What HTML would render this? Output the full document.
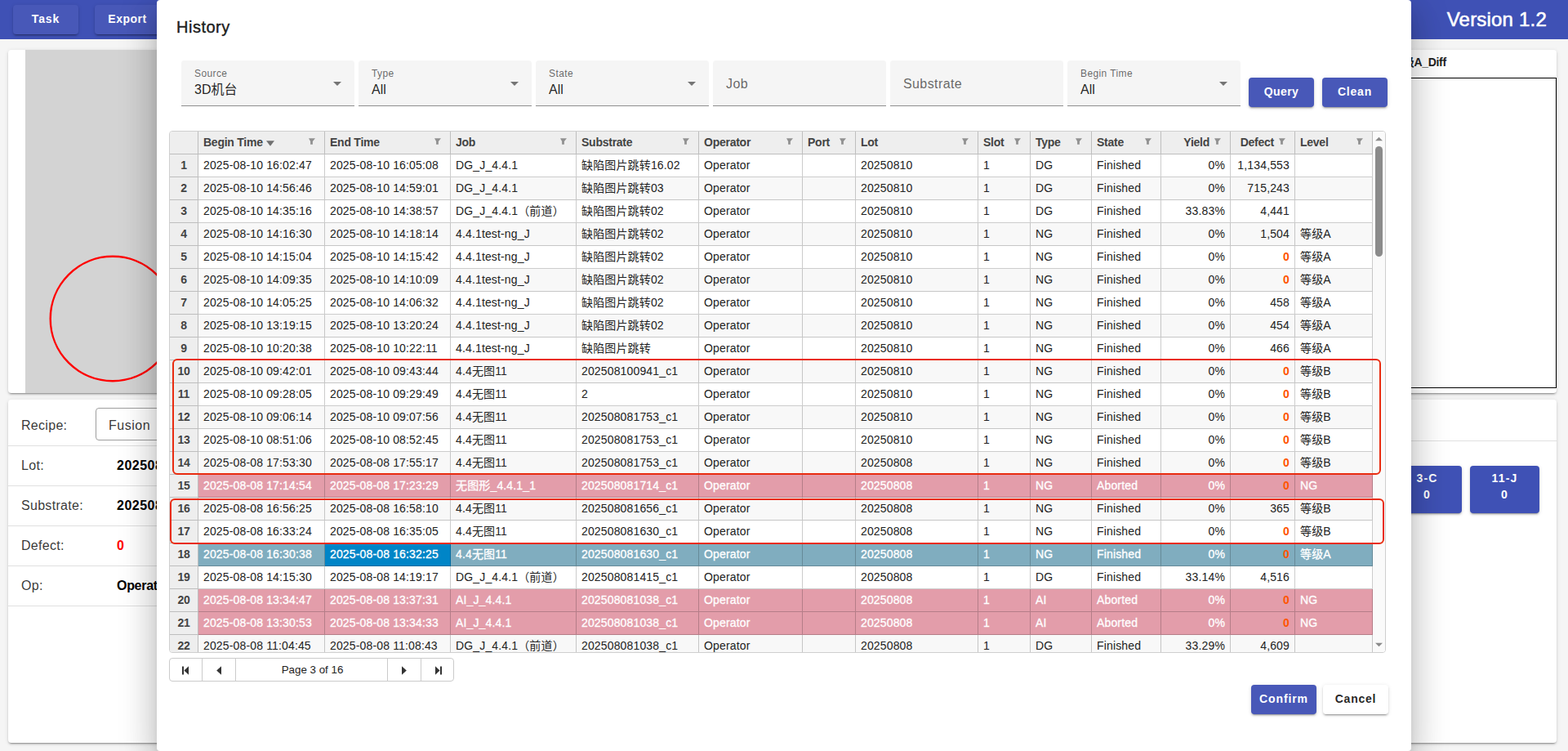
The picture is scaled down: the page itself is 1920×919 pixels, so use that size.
<!DOCTYPE html>
<html lang="en"><head><meta charset="utf-8"><title>History</title>
<style>
*{box-sizing:border-box;margin:0;padding:0}
html,body{width:1920px;height:919px;overflow:hidden}
body{position:relative;background:#f5f5f5;font-family:"Liberation Sans","Noto Sans CJK SC",sans-serif;font-size:14px;color:rgba(0,0,0,.87)}
.abs{position:absolute}
/* app bar */
#bar{position:absolute;left:0;top:0;width:1920px;height:48px;background:#3f51b5}
.btn{position:absolute;height:36px;border-radius:4px;font-weight:bold;font-size:14px;letter-spacing:1.2px;line-height:34px;text-align:center;white-space:nowrap}
.btn.p{background:#4858b8;color:#fff;box-shadow:0 3px 1px -2px rgba(0,0,0,.2),0 2px 2px 0 rgba(0,0,0,.14),0 1px 5px 0 rgba(0,0,0,.12)}
.btn.w{background:#fff;color:rgba(0,0,0,.87);box-shadow:0 3px 1px -2px rgba(0,0,0,.2),0 2px 2px 0 rgba(0,0,0,.14),0 1px 5px 0 rgba(0,0,0,.12)}
#ver{position:absolute;right:26px;top:9px;height:30px;line-height:30px;font-size:24px;font-weight:normal;letter-spacing:.2px;-webkit-text-stroke:.55px #fff;color:#fff;white-space:nowrap}
/* cards */
.card{position:absolute;background:#fff;border-radius:4px;box-shadow:0 3px 1px -2px rgba(0,0,0,.2),0 2px 2px 0 rgba(0,0,0,.14),0 1px 5px 0 rgba(0,0,0,.12);overflow:hidden}
.lrow{position:absolute;left:0;width:100%;height:49px;border-bottom:1px solid #e0e0e0}
.lrow .k{position:absolute;left:16px;top:0;line-height:47px;font-size:16px;letter-spacing:.3px;color:rgba(0,0,0,.8)}
.lrow .v{position:absolute;left:133px;top:0;line-height:47px;font-size:16px;font-weight:bold;color:#000;white-space:nowrap;letter-spacing:.5px}
/* dialog */
#dlg{position:absolute;left:192px;top:0;width:1536px;height:919px;background:#fff;border-radius:4px;box-shadow:0 11px 15px -7px rgba(0,0,0,.2),0 24px 38px 3px rgba(0,0,0,.14),0 9px 46px 8px rgba(0,0,0,.12)}
#ttl{position:absolute;left:24px;top:18px;font-size:20px;line-height:30px;font-weight:normal;letter-spacing:.5px;-webkit-text-stroke:.45px rgba(0,0,0,.87);color:rgba(0,0,0,.87)}
.fld{position:absolute;top:74px;width:212px;height:56px;background:#f5f5f5;border-radius:4px 4px 0 0;border-bottom:1px solid #8e8e8e}
.fld .lb{position:absolute;left:16px;top:9px;font-size:12px;line-height:14px;letter-spacing:.4px;color:rgba(0,0,0,.6)}
.fld .vl{position:absolute;left:16px;top:26px;font-size:16px;line-height:20px;color:rgba(0,0,0,.87);white-space:nowrap}
.fld .ph{position:absolute;left:16px;top:19px;font-size:16px;line-height:20px;letter-spacing:.4px;color:rgba(0,0,0,.6)}
.fld>svg{position:absolute;right:16px;top:26px;fill:#757575}
/* grid */
#grid{position:absolute;left:15px;top:160px;width:1490px;height:639px;border:1px solid #cfcfcf;border-radius:4px;overflow:hidden;background:#fafafa}
#gin{position:absolute;left:0;top:0;width:1473px;height:637px;overflow:hidden}
.gr{position:absolute;left:0;width:1473px;height:28px}
.c{position:absolute;top:0;height:28px;padding:0 6px;line-height:27px;border-right:1px solid rgba(0,0,0,.2);border-bottom:1px solid rgba(0,0,0,.2);background:#fff;white-space:nowrap;overflow:hidden;font-size:14px;color:#222;letter-spacing:.15px}
.alt .c{background:#f8f8f8}
.c.r{text-align:right}
.c.rh,.hd .c{background:#eee;color:#444;font-weight:bold;letter-spacing:-.25px}
.c.rh{text-align:center;padding:0}
.ab .c{background:#e39daa;color:#fff;-webkit-text-stroke:.3px #fff}
.ms .c{background:#80adbf;color:#fff;-webkit-text-stroke:.3px #fff}
.ms .c.sel{background:#0085c7}
.ab .c.rh,.ms .c.rh{background:#eee;color:#444;-webkit-text-stroke:0}
.z{color:#f50;font-weight:bold;-webkit-text-stroke:0}
.hd .c{padding-right:24px}
.hd .c.r{padding-right:25px}
.fi{position:absolute;right:10px;top:8px;fill:#919191}
.si{display:inline-block;margin-left:4px;fill:#707070;position:relative;top:0px}
/* scrollbar */
#sb{position:absolute;left:1473px;top:0;width:15px;height:637px;background:#fafafa}
/* annotations */
.ann{position:absolute;border:2px solid #e92c10;border-radius:6px}
/* pager */
#pg{position:absolute;left:15px;top:805px;width:349px;height:29px;border:1px solid #cbcbcb;border-radius:4px;background:#fff}
#pg .d{position:absolute;top:0;width:1px;height:27px;background:#cbcbcb}
#pg .t{position:absolute;left:82px;width:185px;top:0;height:27px;line-height:27px;text-align:center;font-size:13.33px;color:#222}
#pg svg{position:absolute;fill:#333}

</style></head>
<body>
<div id="bar">
  <div class="btn p" style="left:16px;top:6px;width:80px;letter-spacing:.85px">Task</div>
  <div class="btn p" style="left:116px;top:6px;width:80px;letter-spacing:.5px">Export</div>
  <div id="ver">Version 1.2</div>
</div>

<!-- left upper card -->
<div class="card" style="left:10px;top:61px;width:600px;height:420px">
  <div class="abs" style="left:21px;top:0;width:579px;height:420px;background:#d3d3d3"></div>
  <svg class="abs" style="left:0;top:0" width="600" height="420"><circle cx="128" cy="329" r="76.3" fill="none" stroke="#f00" stroke-width="2.4"/></svg>
</div>
<!-- left lower card -->
<div class="card" style="left:10px;top:489px;width:600px;height:420px">
  <div class="lrow" style="top:8px"><span class="k">Recipe:</span>
    <div class="abs" style="left:107px;top:2px;width:300px;height:40px;border:1px solid #9e9e9e;border-radius:4px;padding-left:15px;line-height:41px;font-size:16px;letter-spacing:.5px;color:rgba(0,0,0,.8)">Fusion</div></div>
  <div class="lrow" style="top:57px"><span class="k">Lot:</span><span class="v">20250808</span></div>
  <div class="lrow" style="top:106px"><span class="k">Substrate:</span><span class="v">202508081630_c1</span></div>
  <div class="lrow" style="top:155px"><span class="k">Defect:</span><span class="v" style="color:#f00">0</span></div>
  <div class="lrow" style="top:204px"><span class="k">Op:</span><span class="v" style="letter-spacing:-.3px">Operator</span></div>
</div>

<!-- right upper card -->
<div class="card" style="left:1306px;top:61px;width:600px;height:420px">
  <div class="abs" style="left:398px;top:6px;line-height:18px;font-size:14px;font-weight:bold;color:#222;white-space:nowrap;letter-spacing:-.3px">等级A_Diff</div>
  <div class="abs" style="left:100px;top:34px;width:500px;height:380px;border:1px solid #000;background:#fff"></div>
</div>
<!-- right lower card -->
<div class="card" style="left:1306px;top:489px;width:600px;height:420px">
  <div class="abs" style="left:0;top:50px;width:600px;height:1px;background:#e0e0e0"></div>
  <div class="btn p" style="left:399px;top:81px;width:85px;height:58px;background:#3f51b5;line-height:20px;padding-top:5px">3-C<br>0</div>
  <div class="btn p" style="left:494px;top:81px;width:85px;height:58px;background:#3f51b5;line-height:20px;padding-top:5px">11-J<br>0</div>
</div>

<!-- dialog -->
<div id="dlg">
  <div id="ttl">History</div>
  <div class="fld" style="left:30px"><span class="lb">Source</span><span class="vl">3D机台</span><svg width="10" height="5" viewBox="0 0 10 5"><path d="M0 0H10L5 5Z"/></svg></div>
  <div class="fld" style="left:247px"><span class="lb">Type</span><span class="vl">All</span><svg width="10" height="5" viewBox="0 0 10 5"><path d="M0 0H10L5 5Z"/></svg></div>
  <div class="fld" style="left:464px"><span class="lb">State</span><span class="vl">All</span><svg width="10" height="5" viewBox="0 0 10 5"><path d="M0 0H10L5 5Z"/></svg></div>
  <div class="fld" style="left:681px"><span class="ph">Job</span></div>
  <div class="fld" style="left:898px"><span class="ph">Substrate</span></div>
  <div class="fld" style="left:1115px"><span class="lb">Begin Time</span><span class="vl">All</span><svg width="10" height="5" viewBox="0 0 10 5"><path d="M0 0H10L5 5Z"/></svg></div>
  <div class="btn p" style="left:1337px;top:95px;width:80px;letter-spacing:.4px">Query</div>
  <div class="btn p" style="left:1427px;top:95px;width:80px;letter-spacing:.8px">Clean</div>

  <div id="grid">
    <div id="gin">
<div class="gr hd" style="top:0">
<div class="c h rh" style="left:0px;width:35px"></div>
<div class="c h" style="left:35px;width:155px"><span class="ht">Begin Time</span><svg class="si" width="10" height="7" viewBox="0 0 10 7"><path d="M0 0.3H10L5 6.8Z"/></svg><svg class="fi" width="10" height="9" viewBox="0 0 10 9"><path d="M1 0.2H9L5.9 3.9V7.8H3.1V3.9Z"/></svg></div>
<div class="c h" style="left:190px;width:154px"><span class="ht">End Time</span><svg class="fi" width="10" height="9" viewBox="0 0 10 9"><path d="M1 0.2H9L5.9 3.9V7.8H3.1V3.9Z"/></svg></div>
<div class="c h" style="left:344px;width:154px"><span class="ht">Job</span><svg class="fi" width="10" height="9" viewBox="0 0 10 9"><path d="M1 0.2H9L5.9 3.9V7.8H3.1V3.9Z"/></svg></div>
<div class="c h" style="left:498px;width:150px"><span class="ht">Substrate</span><svg class="fi" width="10" height="9" viewBox="0 0 10 9"><path d="M1 0.2H9L5.9 3.9V7.8H3.1V3.9Z"/></svg></div>
<div class="c h" style="left:648px;width:127px"><span class="ht">Operator</span><svg class="fi" width="10" height="9" viewBox="0 0 10 9"><path d="M1 0.2H9L5.9 3.9V7.8H3.1V3.9Z"/></svg></div>
<div class="c h" style="left:775px;width:65px"><span class="ht">Port</span><svg class="fi" width="10" height="9" viewBox="0 0 10 9"><path d="M1 0.2H9L5.9 3.9V7.8H3.1V3.9Z"/></svg></div>
<div class="c h" style="left:840px;width:150px"><span class="ht">Lot</span><svg class="fi" width="10" height="9" viewBox="0 0 10 9"><path d="M1 0.2H9L5.9 3.9V7.8H3.1V3.9Z"/></svg></div>
<div class="c h" style="left:990px;width:64px"><span class="ht">Slot</span><svg class="fi" width="10" height="9" viewBox="0 0 10 9"><path d="M1 0.2H9L5.9 3.9V7.8H3.1V3.9Z"/></svg></div>
<div class="c h" style="left:1054px;width:75px"><span class="ht">Type</span><svg class="fi" width="10" height="9" viewBox="0 0 10 9"><path d="M1 0.2H9L5.9 3.9V7.8H3.1V3.9Z"/></svg></div>
<div class="c h" style="left:1129px;width:85px"><span class="ht">State</span><svg class="fi" width="10" height="9" viewBox="0 0 10 9"><path d="M1 0.2H9L5.9 3.9V7.8H3.1V3.9Z"/></svg></div>
<div class="c h r" style="left:1214px;width:85px"><span class="ht">Yield</span><svg class="fi" width="10" height="9" viewBox="0 0 10 9"><path d="M1 0.2H9L5.9 3.9V7.8H3.1V3.9Z"/></svg></div>
<div class="c h r" style="left:1299px;width:79px"><span class="ht">Defect</span><svg class="fi" width="10" height="9" viewBox="0 0 10 9"><path d="M1 0.2H9L5.9 3.9V7.8H3.1V3.9Z"/></svg></div>
<div class="c h" style="left:1378px;width:95px"><span class="ht">Level</span><svg class="fi" width="10" height="9" viewBox="0 0 10 9"><path d="M1 0.2H9L5.9 3.9V7.8H3.1V3.9Z"/></svg></div>
</div>
<div class="gr" style="top:28px">
<div class="c rh" style="left:0px;width:35px">1</div>
<div class="c" style="left:35px;width:155px">2025-08-10 16:02:47</div>
<div class="c" style="left:190px;width:154px">2025-08-10 16:05:08</div>
<div class="c" style="left:344px;width:154px">DG_J_4.4.1</div>
<div class="c" style="left:498px;width:150px">缺陷图片跳转16.02</div>
<div class="c" style="left:648px;width:127px">Operator</div>
<div class="c" style="left:775px;width:65px"></div>
<div class="c" style="left:840px;width:150px">20250810</div>
<div class="c" style="left:990px;width:64px">1</div>
<div class="c" style="left:1054px;width:75px">DG</div>
<div class="c" style="left:1129px;width:85px">Finished</div>
<div class="c r" style="left:1214px;width:85px">0%</div>
<div class="c r" style="left:1299px;width:79px">1,134,553</div>
<div class="c" style="left:1378px;width:95px"></div>
</div>
<div class="gr alt" style="top:56px">
<div class="c rh" style="left:0px;width:35px">2</div>
<div class="c" style="left:35px;width:155px">2025-08-10 14:56:46</div>
<div class="c" style="left:190px;width:154px">2025-08-10 14:59:01</div>
<div class="c" style="left:344px;width:154px">DG_J_4.4.1</div>
<div class="c" style="left:498px;width:150px">缺陷图片跳转03</div>
<div class="c" style="left:648px;width:127px">Operator</div>
<div class="c" style="left:775px;width:65px"></div>
<div class="c" style="left:840px;width:150px">20250810</div>
<div class="c" style="left:990px;width:64px">1</div>
<div class="c" style="left:1054px;width:75px">DG</div>
<div class="c" style="left:1129px;width:85px">Finished</div>
<div class="c r" style="left:1214px;width:85px">0%</div>
<div class="c r" style="left:1299px;width:79px">715,243</div>
<div class="c" style="left:1378px;width:95px"></div>
</div>
<div class="gr" style="top:84px">
<div class="c rh" style="left:0px;width:35px">3</div>
<div class="c" style="left:35px;width:155px">2025-08-10 14:35:16</div>
<div class="c" style="left:190px;width:154px">2025-08-10 14:38:57</div>
<div class="c" style="left:344px;width:154px">DG_J_4.4.1（前道）</div>
<div class="c" style="left:498px;width:150px">缺陷图片跳转02</div>
<div class="c" style="left:648px;width:127px">Operator</div>
<div class="c" style="left:775px;width:65px"></div>
<div class="c" style="left:840px;width:150px">20250810</div>
<div class="c" style="left:990px;width:64px">1</div>
<div class="c" style="left:1054px;width:75px">DG</div>
<div class="c" style="left:1129px;width:85px">Finished</div>
<div class="c r" style="left:1214px;width:85px">33.83%</div>
<div class="c r" style="left:1299px;width:79px">4,441</div>
<div class="c" style="left:1378px;width:95px"></div>
</div>
<div class="gr alt" style="top:112px">
<div class="c rh" style="left:0px;width:35px">4</div>
<div class="c" style="left:35px;width:155px">2025-08-10 14:16:30</div>
<div class="c" style="left:190px;width:154px">2025-08-10 14:18:14</div>
<div class="c" style="left:344px;width:154px">4.4.1test-ng_J</div>
<div class="c" style="left:498px;width:150px">缺陷图片跳转02</div>
<div class="c" style="left:648px;width:127px">Operator</div>
<div class="c" style="left:775px;width:65px"></div>
<div class="c" style="left:840px;width:150px">20250810</div>
<div class="c" style="left:990px;width:64px">1</div>
<div class="c" style="left:1054px;width:75px">NG</div>
<div class="c" style="left:1129px;width:85px">Finished</div>
<div class="c r" style="left:1214px;width:85px">0%</div>
<div class="c r" style="left:1299px;width:79px">1,504</div>
<div class="c" style="left:1378px;width:95px">等级A</div>
</div>
<div class="gr" style="top:140px">
<div class="c rh" style="left:0px;width:35px">5</div>
<div class="c" style="left:35px;width:155px">2025-08-10 14:15:04</div>
<div class="c" style="left:190px;width:154px">2025-08-10 14:15:42</div>
<div class="c" style="left:344px;width:154px">4.4.1test-ng_J</div>
<div class="c" style="left:498px;width:150px">缺陷图片跳转02</div>
<div class="c" style="left:648px;width:127px">Operator</div>
<div class="c" style="left:775px;width:65px"></div>
<div class="c" style="left:840px;width:150px">20250810</div>
<div class="c" style="left:990px;width:64px">1</div>
<div class="c" style="left:1054px;width:75px">NG</div>
<div class="c" style="left:1129px;width:85px">Finished</div>
<div class="c r" style="left:1214px;width:85px">0%</div>
<div class="c r" style="left:1299px;width:79px"><b class="z">0</b></div>
<div class="c" style="left:1378px;width:95px">等级A</div>
</div>
<div class="gr alt" style="top:168px">
<div class="c rh" style="left:0px;width:35px">6</div>
<div class="c" style="left:35px;width:155px">2025-08-10 14:09:35</div>
<div class="c" style="left:190px;width:154px">2025-08-10 14:10:09</div>
<div class="c" style="left:344px;width:154px">4.4.1test-ng_J</div>
<div class="c" style="left:498px;width:150px">缺陷图片跳转02</div>
<div class="c" style="left:648px;width:127px">Operator</div>
<div class="c" style="left:775px;width:65px"></div>
<div class="c" style="left:840px;width:150px">20250810</div>
<div class="c" style="left:990px;width:64px">1</div>
<div class="c" style="left:1054px;width:75px">NG</div>
<div class="c" style="left:1129px;width:85px">Finished</div>
<div class="c r" style="left:1214px;width:85px">0%</div>
<div class="c r" style="left:1299px;width:79px"><b class="z">0</b></div>
<div class="c" style="left:1378px;width:95px">等级A</div>
</div>
<div class="gr" style="top:196px">
<div class="c rh" style="left:0px;width:35px">7</div>
<div class="c" style="left:35px;width:155px">2025-08-10 14:05:25</div>
<div class="c" style="left:190px;width:154px">2025-08-10 14:06:32</div>
<div class="c" style="left:344px;width:154px">4.4.1test-ng_J</div>
<div class="c" style="left:498px;width:150px">缺陷图片跳转02</div>
<div class="c" style="left:648px;width:127px">Operator</div>
<div class="c" style="left:775px;width:65px"></div>
<div class="c" style="left:840px;width:150px">20250810</div>
<div class="c" style="left:990px;width:64px">1</div>
<div class="c" style="left:1054px;width:75px">NG</div>
<div class="c" style="left:1129px;width:85px">Finished</div>
<div class="c r" style="left:1214px;width:85px">0%</div>
<div class="c r" style="left:1299px;width:79px">458</div>
<div class="c" style="left:1378px;width:95px">等级A</div>
</div>
<div class="gr alt" style="top:224px">
<div class="c rh" style="left:0px;width:35px">8</div>
<div class="c" style="left:35px;width:155px">2025-08-10 13:19:15</div>
<div class="c" style="left:190px;width:154px">2025-08-10 13:20:24</div>
<div class="c" style="left:344px;width:154px">4.4.1test-ng_J</div>
<div class="c" style="left:498px;width:150px">缺陷图片跳转02</div>
<div class="c" style="left:648px;width:127px">Operator</div>
<div class="c" style="left:775px;width:65px"></div>
<div class="c" style="left:840px;width:150px">20250810</div>
<div class="c" style="left:990px;width:64px">1</div>
<div class="c" style="left:1054px;width:75px">NG</div>
<div class="c" style="left:1129px;width:85px">Finished</div>
<div class="c r" style="left:1214px;width:85px">0%</div>
<div class="c r" style="left:1299px;width:79px">454</div>
<div class="c" style="left:1378px;width:95px">等级A</div>
</div>
<div class="gr" style="top:252px">
<div class="c rh" style="left:0px;width:35px">9</div>
<div class="c" style="left:35px;width:155px">2025-08-10 10:20:38</div>
<div class="c" style="left:190px;width:154px">2025-08-10 10:22:11</div>
<div class="c" style="left:344px;width:154px">4.4.1test-ng_J</div>
<div class="c" style="left:498px;width:150px">缺陷图片跳转</div>
<div class="c" style="left:648px;width:127px">Operator</div>
<div class="c" style="left:775px;width:65px"></div>
<div class="c" style="left:840px;width:150px">20250810</div>
<div class="c" style="left:990px;width:64px">1</div>
<div class="c" style="left:1054px;width:75px">NG</div>
<div class="c" style="left:1129px;width:85px">Finished</div>
<div class="c r" style="left:1214px;width:85px">0%</div>
<div class="c r" style="left:1299px;width:79px">466</div>
<div class="c" style="left:1378px;width:95px">等级A</div>
</div>
<div class="gr alt" style="top:280px">
<div class="c rh" style="left:0px;width:35px">10</div>
<div class="c" style="left:35px;width:155px">2025-08-10 09:42:01</div>
<div class="c" style="left:190px;width:154px">2025-08-10 09:43:44</div>
<div class="c" style="left:344px;width:154px">4.4无图11</div>
<div class="c" style="left:498px;width:150px">202508100941_c1</div>
<div class="c" style="left:648px;width:127px">Operator</div>
<div class="c" style="left:775px;width:65px"></div>
<div class="c" style="left:840px;width:150px">20250810</div>
<div class="c" style="left:990px;width:64px">1</div>
<div class="c" style="left:1054px;width:75px">NG</div>
<div class="c" style="left:1129px;width:85px">Finished</div>
<div class="c r" style="left:1214px;width:85px">0%</div>
<div class="c r" style="left:1299px;width:79px"><b class="z">0</b></div>
<div class="c" style="left:1378px;width:95px">等级B</div>
</div>
<div class="gr" style="top:308px">
<div class="c rh" style="left:0px;width:35px">11</div>
<div class="c" style="left:35px;width:155px">2025-08-10 09:28:05</div>
<div class="c" style="left:190px;width:154px">2025-08-10 09:29:49</div>
<div class="c" style="left:344px;width:154px">4.4无图11</div>
<div class="c" style="left:498px;width:150px">2</div>
<div class="c" style="left:648px;width:127px">Operator</div>
<div class="c" style="left:775px;width:65px"></div>
<div class="c" style="left:840px;width:150px">20250810</div>
<div class="c" style="left:990px;width:64px">1</div>
<div class="c" style="left:1054px;width:75px">NG</div>
<div class="c" style="left:1129px;width:85px">Finished</div>
<div class="c r" style="left:1214px;width:85px">0%</div>
<div class="c r" style="left:1299px;width:79px"><b class="z">0</b></div>
<div class="c" style="left:1378px;width:95px">等级B</div>
</div>
<div class="gr alt" style="top:336px">
<div class="c rh" style="left:0px;width:35px">12</div>
<div class="c" style="left:35px;width:155px">2025-08-10 09:06:14</div>
<div class="c" style="left:190px;width:154px">2025-08-10 09:07:56</div>
<div class="c" style="left:344px;width:154px">4.4无图11</div>
<div class="c" style="left:498px;width:150px">202508081753_c1</div>
<div class="c" style="left:648px;width:127px">Operator</div>
<div class="c" style="left:775px;width:65px"></div>
<div class="c" style="left:840px;width:150px">20250810</div>
<div class="c" style="left:990px;width:64px">1</div>
<div class="c" style="left:1054px;width:75px">NG</div>
<div class="c" style="left:1129px;width:85px">Finished</div>
<div class="c r" style="left:1214px;width:85px">0%</div>
<div class="c r" style="left:1299px;width:79px"><b class="z">0</b></div>
<div class="c" style="left:1378px;width:95px">等级B</div>
</div>
<div class="gr" style="top:364px">
<div class="c rh" style="left:0px;width:35px">13</div>
<div class="c" style="left:35px;width:155px">2025-08-10 08:51:06</div>
<div class="c" style="left:190px;width:154px">2025-08-10 08:52:45</div>
<div class="c" style="left:344px;width:154px">4.4无图11</div>
<div class="c" style="left:498px;width:150px">202508081753_c1</div>
<div class="c" style="left:648px;width:127px">Operator</div>
<div class="c" style="left:775px;width:65px"></div>
<div class="c" style="left:840px;width:150px">20250810</div>
<div class="c" style="left:990px;width:64px">1</div>
<div class="c" style="left:1054px;width:75px">NG</div>
<div class="c" style="left:1129px;width:85px">Finished</div>
<div class="c r" style="left:1214px;width:85px">0%</div>
<div class="c r" style="left:1299px;width:79px"><b class="z">0</b></div>
<div class="c" style="left:1378px;width:95px">等级B</div>
</div>
<div class="gr alt" style="top:392px">
<div class="c rh" style="left:0px;width:35px">14</div>
<div class="c" style="left:35px;width:155px">2025-08-08 17:53:30</div>
<div class="c" style="left:190px;width:154px">2025-08-08 17:55:17</div>
<div class="c" style="left:344px;width:154px">4.4无图11</div>
<div class="c" style="left:498px;width:150px">202508081753_c1</div>
<div class="c" style="left:648px;width:127px">Operator</div>
<div class="c" style="left:775px;width:65px"></div>
<div class="c" style="left:840px;width:150px">20250808</div>
<div class="c" style="left:990px;width:64px">1</div>
<div class="c" style="left:1054px;width:75px">NG</div>
<div class="c" style="left:1129px;width:85px">Finished</div>
<div class="c r" style="left:1214px;width:85px">0%</div>
<div class="c r" style="left:1299px;width:79px"><b class="z">0</b></div>
<div class="c" style="left:1378px;width:95px">等级B</div>
</div>
<div class="gr ab" style="top:420px">
<div class="c rh" style="left:0px;width:35px">15</div>
<div class="c" style="left:35px;width:155px">2025-08-08 17:14:54</div>
<div class="c" style="left:190px;width:154px">2025-08-08 17:23:29</div>
<div class="c" style="left:344px;width:154px">无图形_4.4.1_1</div>
<div class="c" style="left:498px;width:150px">202508081714_c1</div>
<div class="c" style="left:648px;width:127px">Operator</div>
<div class="c" style="left:775px;width:65px"></div>
<div class="c" style="left:840px;width:150px">20250808</div>
<div class="c" style="left:990px;width:64px">1</div>
<div class="c" style="left:1054px;width:75px">NG</div>
<div class="c" style="left:1129px;width:85px">Aborted</div>
<div class="c r" style="left:1214px;width:85px">0%</div>
<div class="c r" style="left:1299px;width:79px"><b class="z">0</b></div>
<div class="c" style="left:1378px;width:95px">NG</div>
</div>
<div class="gr alt" style="top:448px">
<div class="c rh" style="left:0px;width:35px">16</div>
<div class="c" style="left:35px;width:155px">2025-08-08 16:56:25</div>
<div class="c" style="left:190px;width:154px">2025-08-08 16:58:10</div>
<div class="c" style="left:344px;width:154px">4.4无图11</div>
<div class="c" style="left:498px;width:150px">202508081656_c1</div>
<div class="c" style="left:648px;width:127px">Operator</div>
<div class="c" style="left:775px;width:65px"></div>
<div class="c" style="left:840px;width:150px">20250808</div>
<div class="c" style="left:990px;width:64px">1</div>
<div class="c" style="left:1054px;width:75px">NG</div>
<div class="c" style="left:1129px;width:85px">Finished</div>
<div class="c r" style="left:1214px;width:85px">0%</div>
<div class="c r" style="left:1299px;width:79px">365</div>
<div class="c" style="left:1378px;width:95px">等级B</div>
</div>
<div class="gr" style="top:476px">
<div class="c rh" style="left:0px;width:35px">17</div>
<div class="c" style="left:35px;width:155px">2025-08-08 16:33:24</div>
<div class="c" style="left:190px;width:154px">2025-08-08 16:35:05</div>
<div class="c" style="left:344px;width:154px">4.4无图11</div>
<div class="c" style="left:498px;width:150px">202508081630_c1</div>
<div class="c" style="left:648px;width:127px">Operator</div>
<div class="c" style="left:775px;width:65px"></div>
<div class="c" style="left:840px;width:150px">20250808</div>
<div class="c" style="left:990px;width:64px">1</div>
<div class="c" style="left:1054px;width:75px">NG</div>
<div class="c" style="left:1129px;width:85px">Finished</div>
<div class="c r" style="left:1214px;width:85px">0%</div>
<div class="c r" style="left:1299px;width:79px"><b class="z">0</b></div>
<div class="c" style="left:1378px;width:95px">等级B</div>
</div>
<div class="gr alt ms" style="top:504px">
<div class="c rh" style="left:0px;width:35px">18</div>
<div class="c" style="left:35px;width:155px">2025-08-08 16:30:38</div>
<div class="c sel" style="left:190px;width:154px">2025-08-08 16:32:25</div>
<div class="c" style="left:344px;width:154px">4.4无图11</div>
<div class="c" style="left:498px;width:150px">202508081630_c1</div>
<div class="c" style="left:648px;width:127px">Operator</div>
<div class="c" style="left:775px;width:65px"></div>
<div class="c" style="left:840px;width:150px">20250808</div>
<div class="c" style="left:990px;width:64px">1</div>
<div class="c" style="left:1054px;width:75px">NG</div>
<div class="c" style="left:1129px;width:85px">Finished</div>
<div class="c r" style="left:1214px;width:85px">0%</div>
<div class="c r" style="left:1299px;width:79px"><b class="z">0</b></div>
<div class="c" style="left:1378px;width:95px">等级A</div>
</div>
<div class="gr" style="top:532px">
<div class="c rh" style="left:0px;width:35px">19</div>
<div class="c" style="left:35px;width:155px">2025-08-08 14:15:30</div>
<div class="c" style="left:190px;width:154px">2025-08-08 14:19:17</div>
<div class="c" style="left:344px;width:154px">DG_J_4.4.1（前道）</div>
<div class="c" style="left:498px;width:150px">202508081415_c1</div>
<div class="c" style="left:648px;width:127px">Operator</div>
<div class="c" style="left:775px;width:65px"></div>
<div class="c" style="left:840px;width:150px">20250808</div>
<div class="c" style="left:990px;width:64px">1</div>
<div class="c" style="left:1054px;width:75px">DG</div>
<div class="c" style="left:1129px;width:85px">Finished</div>
<div class="c r" style="left:1214px;width:85px">33.14%</div>
<div class="c r" style="left:1299px;width:79px">4,516</div>
<div class="c" style="left:1378px;width:95px"></div>
</div>
<div class="gr alt ab" style="top:560px">
<div class="c rh" style="left:0px;width:35px">20</div>
<div class="c" style="left:35px;width:155px">2025-08-08 13:34:47</div>
<div class="c" style="left:190px;width:154px">2025-08-08 13:37:31</div>
<div class="c" style="left:344px;width:154px">AI_J_4.4.1</div>
<div class="c" style="left:498px;width:150px">202508081038_c1</div>
<div class="c" style="left:648px;width:127px">Operator</div>
<div class="c" style="left:775px;width:65px"></div>
<div class="c" style="left:840px;width:150px">20250808</div>
<div class="c" style="left:990px;width:64px">1</div>
<div class="c" style="left:1054px;width:75px">AI</div>
<div class="c" style="left:1129px;width:85px">Aborted</div>
<div class="c r" style="left:1214px;width:85px">0%</div>
<div class="c r" style="left:1299px;width:79px"><b class="z">0</b></div>
<div class="c" style="left:1378px;width:95px">NG</div>
</div>
<div class="gr ab" style="top:588px">
<div class="c rh" style="left:0px;width:35px">21</div>
<div class="c" style="left:35px;width:155px">2025-08-08 13:30:53</div>
<div class="c" style="left:190px;width:154px">2025-08-08 13:34:33</div>
<div class="c" style="left:344px;width:154px">AI_J_4.4.1</div>
<div class="c" style="left:498px;width:150px">202508081038_c1</div>
<div class="c" style="left:648px;width:127px">Operator</div>
<div class="c" style="left:775px;width:65px"></div>
<div class="c" style="left:840px;width:150px">20250808</div>
<div class="c" style="left:990px;width:64px">1</div>
<div class="c" style="left:1054px;width:75px">AI</div>
<div class="c" style="left:1129px;width:85px">Aborted</div>
<div class="c r" style="left:1214px;width:85px">0%</div>
<div class="c r" style="left:1299px;width:79px"><b class="z">0</b></div>
<div class="c" style="left:1378px;width:95px">NG</div>
</div>
<div class="gr alt" style="top:616px">
<div class="c rh" style="left:0px;width:35px">22</div>
<div class="c" style="left:35px;width:155px">2025-08-08 11:04:45</div>
<div class="c" style="left:190px;width:154px">2025-08-08 11:08:43</div>
<div class="c" style="left:344px;width:154px">DG_J_4.4.1（前道）</div>
<div class="c" style="left:498px;width:150px">202508081038_c1</div>
<div class="c" style="left:648px;width:127px">Operator</div>
<div class="c" style="left:775px;width:65px"></div>
<div class="c" style="left:840px;width:150px">20250808</div>
<div class="c" style="left:990px;width:64px">1</div>
<div class="c" style="left:1054px;width:75px">DG</div>
<div class="c" style="left:1129px;width:85px">Finished</div>
<div class="c r" style="left:1214px;width:85px">33.29%</div>
<div class="c r" style="left:1299px;width:79px">4,609</div>
<div class="c" style="left:1378px;width:95px"></div>
</div>
    </div>
    <div id="sb">
      <svg class="abs" style="left:3px;top:6px" width="9" height="6" viewBox="0 0 10 6"><path d="M0 5.6L5 0.4L10 5.6Z" fill="#8b8b8b"/></svg>
      <div class="abs" style="left:3px;top:18px;width:9px;height:135px;border-radius:5px;background:#8b8b8b"></div>
      <svg class="abs" style="left:3px;top:625px" width="9" height="6" viewBox="0 0 10 6"><path d="M0 0.4L5 5.6L10 0.4Z" fill="#8b8b8b"/></svg>
    </div>
  </div>
  <div class="ann" style="left:19px;top:439px;width:1480px;height:142px"></div>
  <div class="ann" style="left:16px;top:610px;width:1487px;height:56px"></div>

  <div id="pg">
    <div class="d" style="left:39px"></div><div class="d" style="left:80px"></div><div class="d" style="left:266px"></div><div class="d" style="left:307px"></div>
    <div class="t">Page 3 of 16</div>
    <svg style="left:15px;top:8.5px" width="9" height="11" viewBox="0 0 9 11"><path d="M0 0.5H2V10.5H0ZM2.4 5.5L8 0.3V10.7Z"/></svg>
    <svg style="left:57px;top:8.5px" width="6" height="11" viewBox="0 0 6 11"><path d="M0.2 5.5L6 0.3V10.7Z"/></svg>
    <svg style="left:284px;top:8.5px" width="6" height="11" viewBox="0 0 6 11"><path d="M5.8 5.5L0 0.3V10.7Z"/></svg>
    <svg style="left:324px;top:8.5px" width="9" height="11" viewBox="0 0 9 11"><path d="M7 0.5H9V10.5H7ZM6.6 5.5L1 0.3V10.7Z"/></svg>
  </div>

  <div class="btn p" style="left:1340px;top:838px;width:80px;letter-spacing:.87px">Confirm</div>
  <div class="btn w" style="left:1428px;top:838px;width:80px;letter-spacing:.77px">Cancel</div>
</div>

</body></html>
